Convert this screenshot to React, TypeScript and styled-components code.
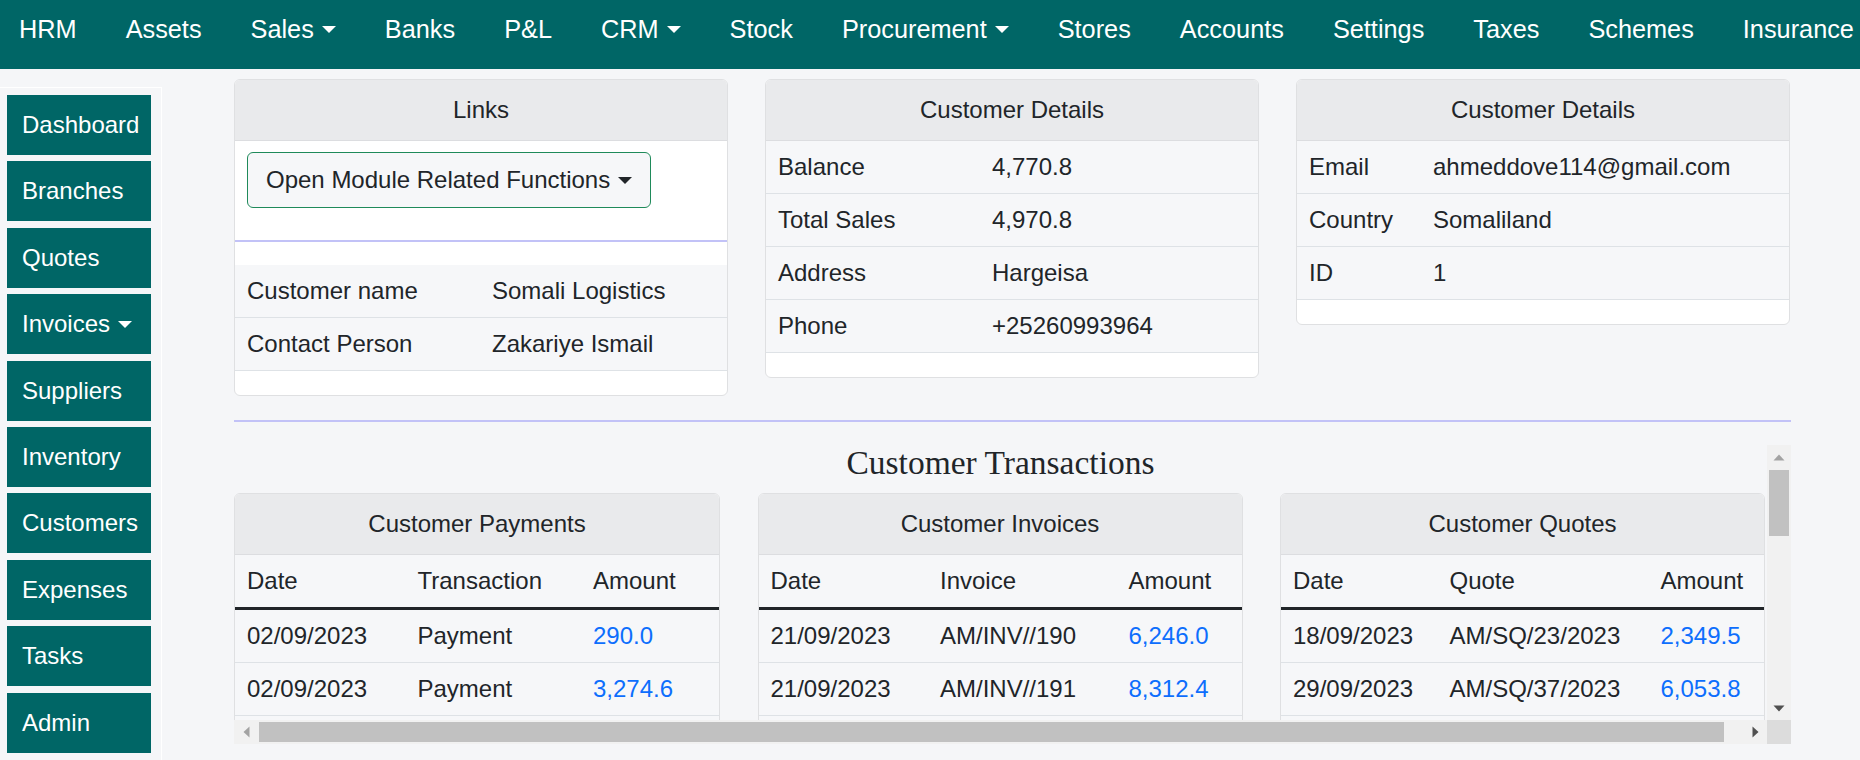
import React from "react";
import styled, { createGlobalStyle } from "styled-components";

const GlobalStyle = createGlobalStyle`
  html, body { margin: 0; padding: 0; }
  body {
    background: #f5f6f8;
    font-family: "Liberation Sans", Arial, sans-serif;
    color: #212529;
    overflow: hidden;
  }
  * { box-sizing: border-box; }
`;

const TopNav = styled.nav`
  height: 69px;
  background: #006666;
  display: flex;
  align-items: flex-start;
  gap: 49px;
  padding: 11px 0 0 19px;
  white-space: nowrap;
  overflow: hidden;
`;

const NavLink = styled.a`
  display: flex;
  align-items: center;
  color: #fff;
  font-size: 25.3px;
  line-height: 37.5px;
  text-decoration: none;
`;

const Caret = styled.span`
  display: inline-block;
  width: 0;
  height: 0;
  margin-left: 8px;
  border-top: 7px solid currentColor;
  border-left: 7px solid transparent;
  border-right: 7px solid transparent;
`;

const Layout = styled.div`
  display: flex;
  align-items: flex-start;
`;

const Sidebar = styled.aside`
  margin-top: 18px;
  width: 162px;
  padding: 7px 10px 8px 7px;
  border: 1px solid #ffffff;
  border-left: none;
  display: flex;
  flex-direction: column;
  gap: 6.4px;
`;

const SideButton = styled.a`
  display: flex;
  align-items: center;
  flex-shrink: 0;
  width: 144px;
  height: 60px;
  padding-left: 15px;
  background: #006666;
  color: #fff;
  font-size: 24px;
  text-decoration: none;
`;

const Main = styled.main`
  margin-left: 72px;
  margin-top: 10px;
  width: 1557px;
`;

const TopRow = styled.div`
  display: grid;
  grid-template-columns: 494px 494px 494px;
  gap: 37px;
  align-items: start;
`;

const Card = styled.section`
  background: #fff;
  border: 1px solid #dfe0e2;
  border-radius: 6px;
  overflow: hidden;
`;

const CardHeader = styled.div`
  background: #e9eaec;
  border-bottom: 1px solid #dcdde0;
  padding: 12px 24px;
  font-size: 24px;
  line-height: 36px;
  text-align: center;
`;

const LinksBody = styled.div`
  padding: 11px 12px 0;
`;

const ModuleButton = styled.button`
  display: inline-flex;
  align-items: center;
  padding: 9px 18px;
  font-family: "Liberation Sans", Arial, sans-serif;
  font-size: 24px;
  line-height: 36px;
  color: #212529;
  background: #f6f7f9;
  border: 1px solid #1f8a5a;
  border-radius: 6px;
`;

const InnerRule = styled.div`
  margin-top: 32px;
  height: 2px;
  background: #c2c2f7;
`;

const DetailTable = styled.div<{ $top?: number }>`
  margin-top: ${(p) => p.$top ?? 0}px;
  margin-bottom: 24px;
`;

const Row = styled.div<{ $cols: string }>`
  display: grid;
  grid-template-columns: ${(p) => p.$cols};
  background: #f6f7f9;
  border-bottom: 1px solid #dee2e6;
`;

const HeadRow = styled(Row)`
  border-bottom: 3px solid #212529;
`;

const Cell = styled.div<{ $link?: boolean }>`
  padding: 12px;
  font-size: 24px;
  line-height: 28px;
  white-space: nowrap;
  color: ${(p) => (p.$link ? "#0d6efd" : "#212529")};
`;

const PageRule = styled.div`
  margin: 24px 0 23px;
  height: 2px;
  background: #c2c2f7;
`;

/* Scroll frame with drawn scrollbars */
const ScrollFrame = styled.div`
  width: 1557px;
  height: 299px;
  display: grid;
  grid-template-columns: 1fr 24px;
  grid-template-rows: 1fr 24px;
`;

const Viewport = styled.div`
  overflow: hidden;
  min-width: 0;
  min-height: 0;
`;

const VBar = styled.div`
  display: flex;
  flex-direction: column;
  background: #f1f1f1;
`;

const HBar = styled.div`
  display: flex;
  background: #f1f1f1;
`;

const ArrowButton = styled.div`
  flex: 0 0 24px;
  width: 24px;
  height: 24px;
  display: flex;
  align-items: center;
  justify-content: center;
`;

const VTrack = styled.div`
  flex: 1;
  padding: 1px 2px 0;
`;

const HTrack = styled.div`
  flex: 1;
  display: flex;
  align-items: center;
  padding: 0 0 0 1px;
`;

const VThumb = styled.div`
  height: 66px;
  background: #c1c1c1;
`;

const HThumb = styled.div`
  width: 1465px;
  height: 20px;
  background: #c1c1c1;
`;

const Corner = styled.div`
  background: #dcdcdc;
`;

const SectionTitle = styled.h2`
  margin: 0 0 12px;
  font-family: "Liberation Serif", "Times New Roman", serif;
  font-weight: normal;
  font-size: 33.5px;
  line-height: 36px;
  text-align: center;
  color: #212529;
`;

const TxRow = styled.div`
  display: grid;
  grid-template-columns: 486px 485px 485px;
  column-gap: 37.5px;
  align-items: start;
  width: max-content;
  padding-right: 21px;
`;

const Arrow = ({ dir, color }: { dir: "up" | "down" | "left" | "right"; color: string }) => {
  const d = {
    up: "M0.5 6.5 L6 0.5 L11.5 6.5 Z",
    down: "M0.5 0.5 L11.5 0.5 L6 6.5 Z",
    left: "M6.5 0.5 L6.5 11.5 L0.5 6 Z",
    right: "M0.5 0.5 L0.5 11.5 L6.5 6 Z",
  }[dir];
  const vertical = dir === "up" || dir === "down";
  return (
    <svg width={vertical ? 12 : 7} height={vertical ? 7 : 12} viewBox={vertical ? "0 0 12 7" : "0 0 7 12"}>
      <path d={d} fill={color} />
    </svg>
  );
};

const navItems: { label: string; caret?: boolean }[] = [
  { label: "HRM" },
  { label: "Assets" },
  { label: "Sales", caret: true },
  { label: "Banks" },
  { label: "P&L" },
  { label: "CRM", caret: true },
  { label: "Stock" },
  { label: "Procurement", caret: true },
  { label: "Stores" },
  { label: "Accounts" },
  { label: "Settings" },
  { label: "Taxes" },
  { label: "Schemes" },
  { label: "Insurance" },
];

const sideItems: { label: string; caret?: boolean }[] = [
  { label: "Dashboard" },
  { label: "Branches" },
  { label: "Quotes" },
  { label: "Invoices", caret: true },
  { label: "Suppliers" },
  { label: "Inventory" },
  { label: "Customers" },
  { label: "Expenses" },
  { label: "Tasks" },
  { label: "Admin" },
];

type Pair = [string, string];

const linksRows: Pair[] = [
  ["Customer name", "Somali Logistics"],
  ["Contact Person", "Zakariye Ismail"],
];

const detailsRows: Pair[] = [
  ["Balance", "4,770.8"],
  ["Total Sales", "4,970.8"],
  ["Address", "Hargeisa"],
  ["Phone", "+25260993964"],
];

const contactRows: Pair[] = [
  ["Email", "ahmeddove114@gmail.com"],
  ["Country", "Somaliland"],
  ["ID", "1"],
];

type Tx = [string, string, string];

const payments: Tx[] = [
  ["02/09/2023", "Payment", "290.0"],
  ["02/09/2023", "Payment", "3,274.6"],
  ["05/09/2023", "Payment", "1,120.0"],
  ["11/09/2023", "Payment", "845.5"],
  ["18/09/2023", "Payment", "2,010.0"],
  ["23/09/2023", "Payment", "660.2"],
  ["30/09/2023", "Payment", "1,432.9"],
];

const invoices: Tx[] = [
  ["21/09/2023", "AM/INV//190", "6,246.0"],
  ["21/09/2023", "AM/INV//191", "8,312.4"],
  ["22/09/2023", "AM/INV//192", "1,905.0"],
  ["23/09/2023", "AM/INV//193", "3,480.7"],
  ["24/09/2023", "AM/INV//194", "2,215.3"],
  ["25/09/2023", "AM/INV//195", "740.0"],
  ["26/09/2023", "AM/INV//196", "5,118.6"],
  ["27/09/2023", "AM/INV//197", "1,362.8"],
  ["28/09/2023", "AM/INV//198", "4,009.1"],
  ["29/09/2023", "AM/INV//199", "2,777.4"],
  ["30/09/2023", "AM/INV//200", "918.0"],
  ["01/10/2023", "AM/INV//201", "3,655.2"],
  ["02/10/2023", "AM/INV//202", "1,240.5"],
  ["03/10/2023", "AM/INV//203", "6,002.9"],
  ["04/10/2023", "AM/INV//204", "2,431.0"],
];

const quotes: Tx[] = [
  ["18/09/2023", "AM/SQ/23/2023", "2,349.5"],
  ["29/09/2023", "AM/SQ/37/2023", "6,053.8"],
  ["02/10/2023", "AM/SQ/41/2023", "1,780.0"],
  ["06/10/2023", "AM/SQ/45/2023", "3,925.4"],
  ["10/10/2023", "AM/SQ/52/2023", "812.6"],
];

function DetailsCard({ title, rows, cols }: { title: string; rows: Pair[]; cols: string }) {
  return (
    <Card>
      <CardHeader>{title}</CardHeader>
      <DetailTable>
        {rows.map(([k, v]) => (
          <Row key={k} $cols={cols}>
            <Cell>{k}</Cell>
            <Cell>{v}</Cell>
          </Row>
        ))}
      </DetailTable>
    </Card>
  );
}

function TxCard({
  title,
  heads,
  rows,
  cols,
}: {
  title: string;
  heads: [string, string, string];
  rows: Tx[];
  cols: string;
}) {
  return (
    <Card>
      <CardHeader>{title}</CardHeader>
      <DetailTable>
        <HeadRow $cols={cols}>
          {heads.map((h) => (
            <Cell key={h}>{h}</Cell>
          ))}
        </HeadRow>
        {rows.map((r, i) => (
          <Row key={i} $cols={cols}>
            <Cell>{r[0]}</Cell>
            <Cell>{r[1]}</Cell>
            <Cell $link>{r[2]}</Cell>
          </Row>
        ))}
      </DetailTable>
    </Card>
  );
}

export default function App() {
  return (
    <>
      <GlobalStyle />
      <TopNav>
        {navItems.map((n) => (
          <NavLink key={n.label} href="#">
            {n.label}
            {n.caret && <Caret />}
          </NavLink>
        ))}
      </TopNav>
      <Layout>
        <Sidebar>
          {sideItems.map((s) => (
            <SideButton key={s.label} href="#">
              {s.label}
              {s.caret && <Caret />}
            </SideButton>
          ))}
        </Sidebar>
        <Main>
          <TopRow>
            <Card>
              <CardHeader>Links</CardHeader>
              <LinksBody>
                <ModuleButton type="button">
                  Open Module Related Functions
                  <Caret />
                </ModuleButton>
              </LinksBody>
              <InnerRule />
              <DetailTable $top={23}>
                {linksRows.map(([k, v]) => (
                  <Row key={k} $cols="245px 1fr">
                    <Cell>{k}</Cell>
                    <Cell>{v}</Cell>
                  </Row>
                ))}
              </DetailTable>
            </Card>
            <DetailsCard title="Customer Details" rows={detailsRows} cols="214px 1fr" />
            <DetailsCard title="Customer Details" rows={contactRows} cols="124px 1fr" />
          </TopRow>
          <PageRule />
          <ScrollFrame>
            <Viewport>
              <SectionTitle>Customer Transactions</SectionTitle>
              <TxRow>
                <TxCard
                  title="Customer Payments"
                  heads={["Date", "Transaction", "Amount"]}
                  rows={payments}
                  cols="170.5px 175.5px 1fr"
                />
                <TxCard
                  title="Customer Invoices"
                  heads={["Date", "Invoice", "Amount"]}
                  rows={invoices}
                  cols="169.5px 188.5px 1fr"
                />
                <TxCard
                  title="Customer Quotes"
                  heads={["Date", "Quote", "Amount"]}
                  rows={quotes}
                  cols="156.5px 211px 1fr"
                />
              </TxRow>
            </Viewport>
            <VBar>
              <ArrowButton>
                <Arrow dir="up" color="#a3a3a3" />
              </ArrowButton>
              <VTrack>
                <VThumb />
              </VTrack>
              <ArrowButton>
                <Arrow dir="down" color="#505050" />
              </ArrowButton>
            </VBar>
            <HBar>
              <ArrowButton>
                <Arrow dir="left" color="#a3a3a3" />
              </ArrowButton>
              <HTrack>
                <HThumb />
              </HTrack>
              <ArrowButton>
                <Arrow dir="right" color="#505050" />
              </ArrowButton>
            </HBar>
            <Corner />
          </ScrollFrame>
        </Main>
      </Layout>
    </>
  );
}
